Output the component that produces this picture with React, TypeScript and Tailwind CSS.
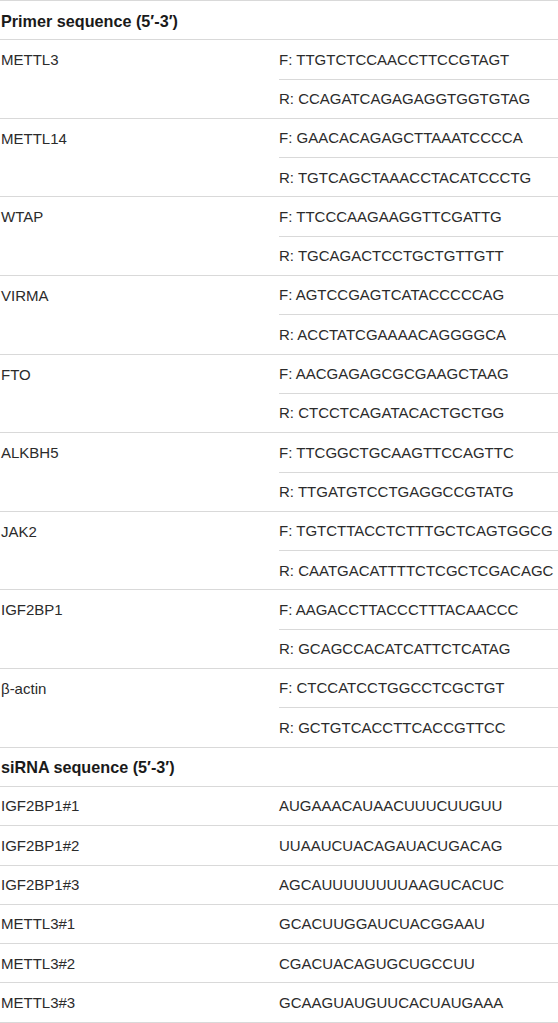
const primers: { gene: string; f: string; r: string }[] = [
  { gene: 'METTL3', f: 'TTGTCTCCAACCTTCCGTAGT', r: 'CCAGATCAGAGAGGTGGTGTAG' },
  { gene: 'METTL14', f: 'GAACACAGAGCTTAAATCCCCA', r: 'TGTCAGCTAAACCTACATCCCTG' },
  { gene: 'WTAP', f: 'TTCCCAAGAAGGTTCGATTG', r: 'TGCAGACTCCTGCTGTTGTT' },
  { gene: 'VIRMA', f: 'AGTCCGAGTCATACCCCCAG', r: 'ACCTATCGAAAACAGGGGCA' },
  { gene: 'FTO', f: 'AACGAGAGCGCGAAGCTAAG', r: 'CTCCTCAGATACACTGCTGG' },
  { gene: 'ALKBH5', f: 'TTCGGCTGCAAGTTCCAGTTC', r: 'TTGATGTCCTGAGGCCGTATG' },
  { gene: 'JAK2', f: 'TGTCTTACCTCTTTGCTCAGTGGCG', r: 'CAATGACATTTTCTCGCTCGACAGC' },
  { gene: 'IGF2BP1', f: 'AAGACCTTACCCTTTACAACCC', r: 'GCAGCCACATCATTCTCATAG' },
  { gene: 'β-actin', f: 'CTCCATCCTGGCCTCGCTGT', r: 'GCTGTCACCTTCACCGTTCC' },
];

const sirnas: [string, string][] = [
  ['IGF2BP1#1', 'AUGAAACAUAACUUUCUUGUU'],
  ['IGF2BP1#2', 'UUAAUCUACAGAUACUGACAG'],
  ['IGF2BP1#3', 'AGCAUUUUUUUUAAGUCACUC'],
  ['METTL3#1', 'GCACUUGGAUCUACGGAAU'],
  ['METTL3#2', 'CGACUACAGUGCUGCCUU'],
  ['METTL3#3', 'GCAAGUAUGUUCACUAUGAAA'],
];

function HeaderRow({ label }: { label: string }) {
  return (
    <div className="h-[39.3px] flex items-center pt-[1px] pl-[1px] border-b border-[#d9d9d9] font-bold text-[16.2px] text-[#1a1a1a]">
      {label}
    </div>
  );
}

export default function App() {
  return (
    <div
      className="w-[558px] bg-white text-[15px] text-[#2b2b2b] border-t border-[#d9d9d9]"
      style={{ fontFamily: '"Liberation Sans", Arial, sans-serif' }}
    >
      <HeaderRow label="Primer sequence (5′-3′)" />
      {primers.map((p) => (
        <div key={p.gene} className="flex border-b border-[#d9d9d9]">
          <div className="w-[279px] h-[39.3px] flex items-center pt-[1px] pl-[1px]">{p.gene}</div>
          <div className="flex-1 flex flex-col">
            <div className="h-[39.3px] flex items-center pt-[1px] border-b border-[#d9d9d9]">F: {p.f}</div>
            <div className="h-[38.3px] flex items-center pt-[1px]">R: {p.r}</div>
          </div>
        </div>
      ))}
      <HeaderRow label="siRNA sequence (5′-3′)" />
      {sirnas.map(([name, seq]) => (
        <div key={name} className="h-[39.3px] flex items-center pt-[1px] border-b border-[#d9d9d9]">
          <div className="w-[279px] pl-[1px]">{name}</div>
          <div className="flex-1">{seq}</div>
        </div>
      ))}
    </div>
  );
}
